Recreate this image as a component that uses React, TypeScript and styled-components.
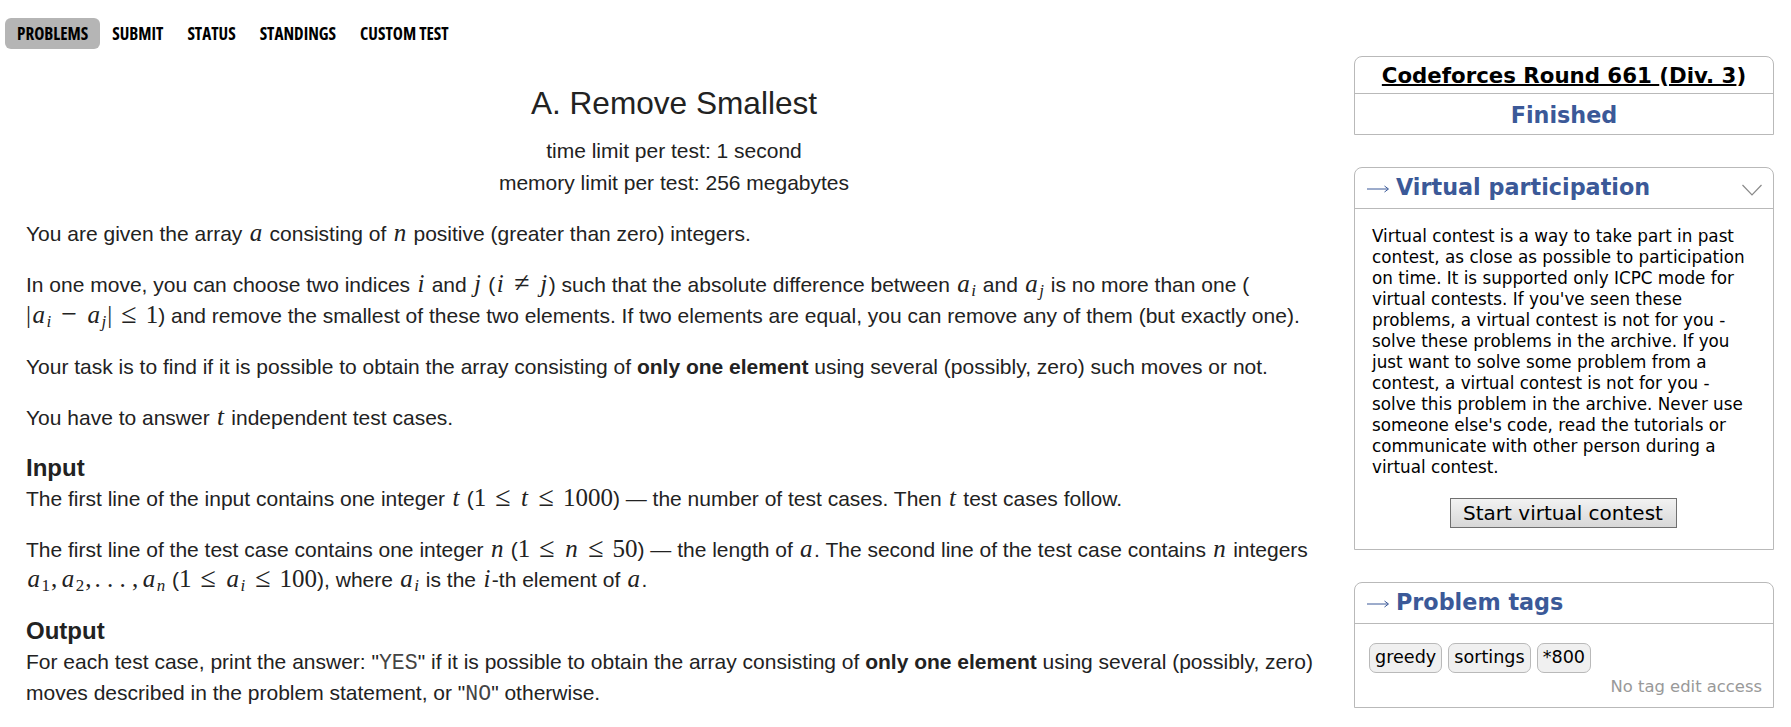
import React from "react";
import styled, { createGlobalStyle } from "styled-components";

const GlobalStyle = createGlobalStyle`
  html, body {
    margin: 0;
    padding: 0;
    background: #fff;
    overflow: hidden;
  }
`;

const Page = styled.div`
  width: 1791px;
  height: 727px;
  overflow: hidden;
  display: flex;
  align-items: flex-start;
  font-family: "Liberation Sans", Arial, sans-serif;
  color: #222;
`;

const Main = styled.main`
  width: 1354px;
  flex: none;
`;

const TabBar = styled.nav`
  display: flex;
  align-items: center;
  height: 40px;
  margin: 13px 0 0 5px;
`;

const Tab = styled.a<{ $active?: boolean }>`
  height: 31px;
  display: flex;
  align-items: center;
  padding: 0 12px;
  border-radius: 6px;
  background: ${(p) => (p.$active ? "#b5b5b5" : "transparent")};
  font-family: "Open Sans", "Noto Sans", sans-serif;
  font-stretch: 75%;
  font-weight: 700;
  font-size: 17.1px;
  color: #000;
`;

const Problem = styled.article`
  padding: 30px 32px 0 26px;
  font-size: 21px;
`;

const Header = styled.header`
  text-align: center;
  margin-bottom: 19px;
`;

const Title = styled.h1`
  font-size: 31.6px;
  font-weight: 400;
  line-height: 40px;
  margin: 0 0 12px;
`;

const Limit = styled.div`
  line-height: 32px;
`;

const Para = styled.p<{ $tight?: boolean }>`
  margin: 0 0 ${(p) => (p.$tight ? 22 : 20)}px;
  line-height: ${(p) => (p.$tight ? 28 : 31)}px;
`;

const SectionTitle = styled.h2`
  margin: 2px 0 0;
  font-size: 24px;
  font-weight: 700;
  line-height: 30px;
`;

const MathText = styled.span`
  font-family: "Liberation Serif", "Times New Roman", serif;
  font-size: 25px;
  line-height: 1;
`;

const Var = styled.i`
  font-style: italic;
  padding: 0 1.5px;
`;

const Op = styled.span`
  font-size: 28px;
  line-height: 1;
  padding: 0 9px;
`;

const Comma = styled.span`
  padding-right: 3px;
`;

const Sub = styled.sub<{ $upright?: boolean }>`
  font-size: 17px;
  font-style: ${(p) => (p.$upright ? "normal" : "italic")};
  line-height: 0;
  vertical-align: -4px;
  padding-right: 1px;
`;

const Mono = styled.code`
  font-family: "Liberation Mono", "Courier New", monospace;
  font-size: 21.5px;
  line-height: 1;
  color: #444;
`;

const Sidebar = styled.aside`
  width: 420px;
  flex: none;
  padding-top: 56px;
  display: flex;
  flex-direction: column;
  gap: 32px;
  font-family: "DejaVu Sans", Verdana, sans-serif;
  color: #000;
`;

const Box = styled.section`
  border: 1px solid #b9b9b9;
  border-top-left-radius: 8px;
  border-top-right-radius: 8px;
`;

const ContestName = styled.div`
  height: 36px;
  line-height: 38px;
  text-align: center;
  font-size: 21.3px;
  font-weight: 700;
  color: #000;
  border-bottom: 1px solid #b9b9b9;
`;

const ContestLink = styled.a`
  color: #000;
  text-decoration: underline;
  text-decoration-thickness: 2px;
`;

const ContestPhase = styled.div`
  height: 40px;
  line-height: 42px;
  text-align: center;
  font-size: 22.3px;
  font-weight: 700;
  color: #3b5998;
`;

const BoxTitle = styled.div`
  display: flex;
  align-items: center;
  justify-content: space-between;
  height: 38px;
  padding: 0 11px 2px 12px;
  border-bottom: 1px solid #b9b9b9;
  font-size: 22.3px;
  font-weight: 700;
  color: #3b5998;
`;

const Heading = styled.span`
  display: flex;
  align-items: center;
  gap: 7px;
`;

const Arrow = styled.svg`
  width: 22px;
  height: 10px;
  margin-top: 4px;
`;

const Chevron = styled.svg`
  width: 20px;
  height: 12px;
  margin-top: 6px;
`;

const BoxBody = styled.div`
  padding: 17px 17px 21px;
  font-size: 16.8px;
  line-height: 21px;
`;

const Description = styled.div`
  margin-bottom: 20px;
`;

const ButtonRow = styled.div`
  display: flex;
  justify-content: center;
  padding-right: 2px;
`;

const Button = styled.button`
  width: 227px;
  height: 30px;
  padding: 0;
  border: 1px solid #707070;
  background: linear-gradient(#f2f2f2, #d8d8d8);
  font-family: "DejaVu Sans", Verdana, sans-serif;
  font-size: 20px;
  color: #000;
`;

const TagsBody = styled.div`
  padding: 19px 13px 9px;
`;

const TagList = styled.div`
  display: flex;
  gap: 6px;
  margin-left: 1px;
`;

const Tag = styled.span`
  height: 28px;
  line-height: 27px;
  padding: 0 5px;
  border: 1px solid #b9b9b9;
  border-radius: 7px;
  background: #f0f0f0;
  font-size: 17.6px;
`;

const EditNote = styled.div`
  text-align: right;
  margin: 3px -2px 0 0;
  font-size: 16.4px;
  line-height: 22px;
  color: #999;
`;

const A = ({ i, upright }: { i?: string; upright?: boolean }) => (
  <>
    <Var>a</Var>
    {i && <Sub $upright={upright}>{i}</Sub>}
  </>
);

const RightArrow = () => (
  <Arrow viewBox="0 0 22 10" fill="none" stroke="#3b5998" strokeWidth="1">
    <path d="M0 5 H21 M17.5 2 L21.5 5 L17.5 8" />
  </Arrow>
);

export default function App() {
  return (
    <>
      <GlobalStyle />
      <Page>
        <Main>
          <TabBar>
            <Tab $active>PROBLEMS</Tab>
            <Tab>SUBMIT</Tab>
            <Tab>STATUS</Tab>
            <Tab>STANDINGS</Tab>
            <Tab>CUSTOM TEST</Tab>
          </TabBar>
          <Problem>
            <Header>
              <Title>A. Remove Smallest</Title>
              <Limit>time limit per test: 1 second</Limit>
              <Limit>memory limit per test: 256 megabytes</Limit>
            </Header>
            <Para>
              You are given the array <MathText><A /></MathText> consisting of{" "}
              <MathText><Var>n</Var></MathText> positive (greater than zero) integers.
            </Para>
            <Para>
              In one move, you can choose two indices <MathText><Var>i</Var></MathText> and{" "}
              <MathText><Var>j</Var></MathText> (<MathText><Var>i</Var><Op>≠</Op><Var>j</Var></MathText>) such
              that the absolute difference between <MathText><A i="i" /></MathText> and{" "}
              <MathText><A i="j" /></MathText> is no more than one (
              <br />
              <MathText>|<A i="i" /><Op>−</Op><A i="j" />|<Op>≤</Op>1</MathText>) and remove the smallest of these two
              elements. If two elements are equal, you can remove any of them (but exactly one).
            </Para>
            <Para>
              Your task is to find if it is possible to obtain the array consisting of{" "}
              <b>only one element</b> using several (possibly, zero) such moves or not.
            </Para>
            <Para>
              You have to answer <MathText><Var>t</Var></MathText> independent test cases.
            </Para>
            <SectionTitle>Input</SectionTitle>
            <Para>
              The first line of the input contains one integer <MathText><Var>t</Var></MathText> (
              <MathText>1<Op>≤</Op><Var>t</Var><Op>≤</Op>1000</MathText>) — the number of test cases. Then{" "}
              <MathText><Var>t</Var></MathText> test cases follow.
            </Para>
            <Para $tight>
              The first line of the test case contains one integer <MathText><Var>n</Var></MathText> (
              <MathText>1<Op>≤</Op><Var>n</Var><Op>≤</Op>50</MathText>) — the length of <MathText><A /></MathText>. The
              second line of the test case contains <MathText><Var>n</Var></MathText> integers
              <br />
              <MathText>
                <A i="1" upright /><Comma>,</Comma><A i="2" upright /><Comma>,</Comma>. . .<Comma> ,</Comma><A i="n" />
              </MathText>{" "}
              (<MathText>1<Op>≤</Op><A i="i" /><Op>≤</Op>100</MathText>), where <MathText><A i="i" /></MathText> is the{" "}
              <MathText><Var>i</Var></MathText>-th element of <MathText><A /></MathText>.
            </Para>
            <SectionTitle>Output</SectionTitle>
            <Para>
              For each test case, print the answer: "<Mono>YES</Mono>" if it is possible to obtain the
              array consisting of <b>only one element</b> using several (possibly, zero)
              <br />
              moves described in the problem statement, or "<Mono>NO</Mono>" otherwise.
            </Para>
          </Problem>
        </Main>
        <Sidebar>
          <Box>
            <ContestName>
              <ContestLink>Codeforces Round 661 </ContestLink>(<ContestLink>Div. 3</ContestLink>)
            </ContestName>
            <ContestPhase>Finished</ContestPhase>
          </Box>
          <Box>
            <BoxTitle>
              <Heading>
                <RightArrow />
                Virtual participation
              </Heading>
              <Chevron viewBox="0 0 20 12" fill="none" stroke="#8a8a8a" strokeWidth="1.2">
                <path d="M0.5 1 L10 11 L19.5 1" />
              </Chevron>
            </BoxTitle>
            <BoxBody>
              <Description>
                Virtual contest is a way to take part in past contest, as close as possible to
                participation on time. It is supported only ICPC mode for virtual contests. If you've seen
                these problems, a virtual contest is not for you - solve these problems in the archive. If
                you just want to solve some problem from a contest, a virtual contest is not for you -
                solve this problem in the archive. Never use someone else's code, read the tutorials or
                communicate with other person during a virtual contest.
              </Description>
              <ButtonRow>
                <Button>Start virtual contest</Button>
              </ButtonRow>
            </BoxBody>
          </Box>
          <Box>
            <BoxTitle>
              <Heading>
                <RightArrow />
                Problem tags
              </Heading>
            </BoxTitle>
            <TagsBody>
              <TagList>
                <Tag>greedy</Tag>
                <Tag>sortings</Tag>
                <Tag>*800</Tag>
              </TagList>
              <EditNote>No tag edit access</EditNote>
            </TagsBody>
          </Box>
        </Sidebar>
      </Page>
    </>
  );
}
